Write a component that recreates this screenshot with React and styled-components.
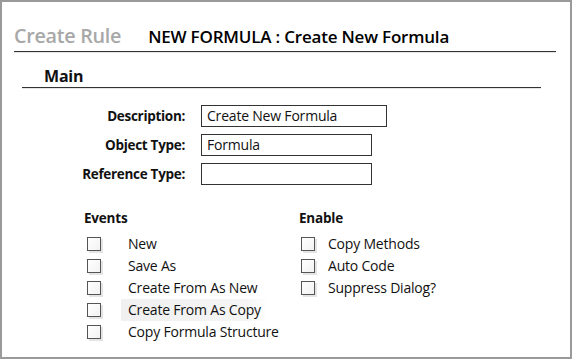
import React from 'react';
import styled, { createGlobalStyle } from 'styled-components';

const GlobalStyle = createGlobalStyle`
  html, body { margin: 0; padding: 0; background: #fff; }
  body { font-family: "Open Sans", "Noto Sans", sans-serif; color: #111; }
`;

const Frame = styled.div`
  box-sizing: border-box;
  width: 572px;
  height: 359px;
  border: 2px solid #9a9a9a;
  background: #fff;
  padding: 20px 14px 0 12px;
`;

const Header = styled.div`
  display: flex;
  align-items: baseline;
  gap: 27px;
  height: 29px;
  border-bottom: 1px solid #333;
  box-shadow: 0 1px 0 #e6e6e6;
`;

const Title = styled.span`
  font-size: 19.8px;
  color: #a8a8a8;
  font-weight: 600;
  letter-spacing: -0.3px;
`;

const Subtitle = styled.span`
  font-size: 17px;
  font-weight: 600;
  color: #000;
  letter-spacing: -0.2px;
`;

const Section = styled.div`
  margin: 12px 15px 0 8px;
  padding-left: 22px;
  height: 23px;
  border-bottom: 1px solid #333;
  box-shadow: 0 1px 0 #e6e6e6;
  font-size: 16px;
  font-weight: 700;
  line-height: 25px;
  letter-spacing: -0.2px;
`;

const Form = styled.div`
  display: grid;
  grid-template-columns: 171px auto;
  column-gap: 16px;
  row-gap: 7px;
  margin-top: 17px;
  align-items: center;
`;

const Label = styled.div`
  text-align: right;
  font-size: 13.5px;
  font-weight: 700;
  letter-spacing: -0.3px;
`;

const Field = styled.div`
  box-sizing: border-box;
  width: ${p => p.$w}px;
  height: 22px;
  border: 1px solid #333;
  padding: 0 5px;
  font-size: 14px;
  line-height: 20px;
  letter-spacing: -0.2px;
`;

const Groups = styled.div`
  display: flex;
  margin-top: 24px;
  padding-left: 70px;
`;

const Group = styled.div`
  width: ${p => p.$w}px;
`;

const GroupTitle = styled.div`
  font-size: 13.5px;
  font-weight: 700;
  letter-spacing: -0.2px;
  height: 18px;
  margin-bottom: 6px;
`;

const Row = styled.div`
  display: flex;
  align-items: center;
  height: 22px;
`;

const Box = styled.span`
  box-sizing: border-box;
  width: 14px;
  height: 14px;
  margin-left: ${p => p.$ml}px;
  border: 1px solid #555;
  background: linear-gradient(135deg, #fff, #f2f2f2);
  box-shadow: 2px 2px 0 #e4e4e4;
  flex: none;
`;

const Text = styled.span`
  margin-left: ${p => p.$gap}px;
  font-size: 14px;
  letter-spacing: -0.2px;
  line-height: 22px;
  padding: 0 ${p => (p.$hl ? 7 : 0)}px;
  background: ${p => (p.$hl ? 'linear-gradient(90deg, #f0f0f0, #f5f5f5 85%, #fff)' : 'transparent')};
`;

const events = [
  { label: 'New' },
  { label: 'Save As' },
  { label: 'Create From As New' },
  { label: 'Create From As Copy', hl: true },
  { label: 'Copy Formula Structure' },
];

const enables = ['Copy Methods', 'Auto Code', 'Suppress Dialog?'];

export default function App() {
  return (
    <>
      <GlobalStyle />
      <Frame>
        <Header>
          <Title>Create Rule</Title>
          <Subtitle>NEW FORMULA : Create New Formula</Subtitle>
        </Header>
        <Section>Main</Section>
        <Form>
          <Label>Description:</Label>
          <Field $w={186}>Create New Formula</Field>
          <Label>Object Type:</Label>
          <Field $w={171}>Formula</Field>
          <Label>Reference Type:</Label>
          <Field $w={171} />
        </Form>
        <Groups>
          <Group $w={215}>
            <GroupTitle>Events</GroupTitle>
            {events.map(e => (
              <Row key={e.label}>
                <Box $ml={3} />
                <Text $gap={e.hl ? 20 : 27} $hl={e.hl}>{e.label}</Text>
              </Row>
            ))}
          </Group>
          <Group $w={200}>
            <GroupTitle>Enable</GroupTitle>
            {enables.map(t => (
              <Row key={t}>
                <Box $ml={2} />
                <Text $gap={13}>{t}</Text>
              </Row>
            ))}
          </Group>
        </Groups>
      </Frame>
    </>
  );
}
